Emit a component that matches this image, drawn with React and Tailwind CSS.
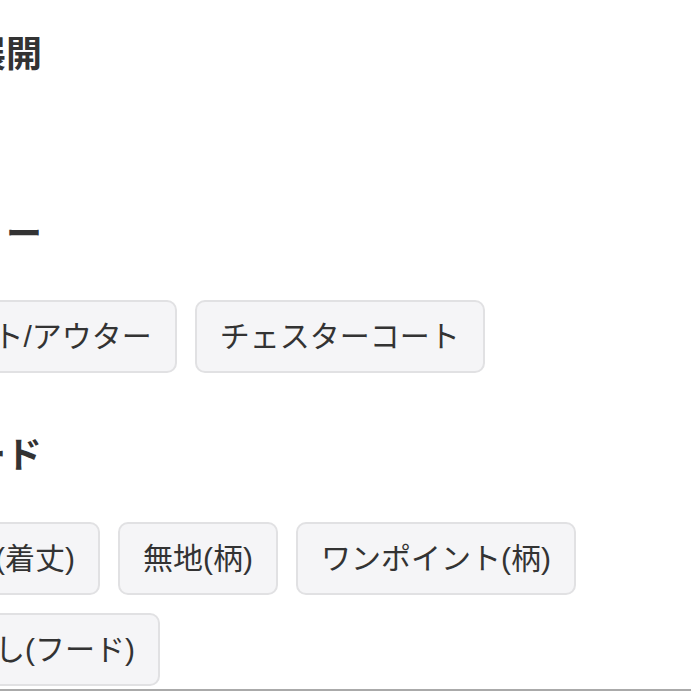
const SECTIONS = [
  { title: "カラー展開", tags: [], gap: "h-[126px]" },
  { title: "カテゴリー", tags: ["ジャケット/アウター", "チェスターコート"] },
  {
    title: "キーワード",
    tags: ["ショート(着丈)", "無地(柄)", "ワンポイント(柄)", "フードなし(フード)"],
  },
];

function Tag({ label }) {
  return (
    <span className="rounded-[10px] border-2 border-[#e1e1e3] bg-[#f5f5f7] px-[23px] py-[12px] text-[30px] leading-[45px] whitespace-nowrap text-[#333333]">
      {label}
    </span>
  );
}

function Heading({ children, className = "" }) {
  return (
    <h2 className={`pl-[12px] text-[36px] leading-[54px] font-bold text-[#333333] ${className}`}>
      {children}
    </h2>
  );
}

export default function App() {
  return (
    <div className="min-h-screen overflow-hidden bg-white">
      <div className="-ml-[150px] w-[841px] border-b-2 border-[#aaaaaa] pt-[28px] pb-[3px] font-['Liberation_Sans','Noto_Sans_CJK_JP',sans-serif]">
        <Heading>{SECTIONS[0].title}</Heading>
        <div className={SECTIONS[0].gap} />

        <Heading>{SECTIONS[1].title}</Heading>
        <div className="mt-[38px] flex flex-wrap gap-[18px]">
          {SECTIONS[1].tags.map((t) => (
            <Tag key={t} label={t} />
          ))}
        </div>

        <Heading className="mt-[56px]">{SECTIONS[2].title}</Heading>
        <div className="mt-[39px] flex flex-wrap gap-[18px]">
          {SECTIONS[2].tags.map((t) => (
            <Tag key={t} label={t} />
          ))}
        </div>
      </div>
    </div>
  );
}
